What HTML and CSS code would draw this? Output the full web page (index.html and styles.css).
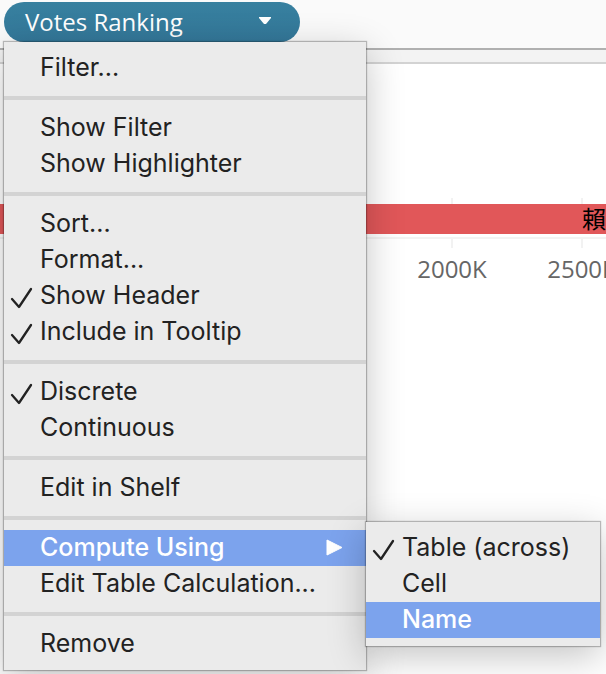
FILE: index.html
```html
<!DOCTYPE html>
<html lang="en">
<head>
<meta charset="utf-8">
<title>Votes Ranking</title>
<link rel="stylesheet" href="styles.css">
</head>
<body>
<svg class="defs" aria-hidden="true">
  <symbol id="check" viewBox="0 0 24 24"><path d="M2 13 9 21 21 3" fill="none" stroke="currentColor" stroke-width="2.3" stroke-linecap="round" stroke-linejoin="round"/></symbol>
</svg>
<header class="shelf">
  <button class="pill" type="button">Votes Ranking
    <svg class="caret" viewBox="0 0 12 8" aria-hidden="true"><path d="M0 0H12V1L7 7H5L0 1Z" fill="currentColor"/></svg>
  </button>
  <div class="menu" role="menu">
    <button class="item" role="menuitem">Filter...</button>
    <hr class="separator">
    <button class="item" role="menuitem">Show Filter</button>
    <button class="item" role="menuitem">Show Highlighter</button>
    <hr class="separator">
    <button class="item" role="menuitem">Sort...</button>
    <button class="item" role="menuitem">Format...</button>
    <button class="item" role="menuitem"><svg class="check"><use href="#check"/></svg>Show Header</button>
    <button class="item" role="menuitem"><svg class="check"><use href="#check"/></svg>Include in Tooltip</button>
    <hr class="separator">
    <button class="item" role="menuitem"><svg class="check"><use href="#check"/></svg>Discrete</button>
    <button class="item" role="menuitem">Continuous</button>
    <hr class="separator">
    <button class="item" role="menuitem">Edit in Shelf</button>
    <hr class="separator">
    <div class="parent">
      <button class="item selected" role="menuitem">Compute Using
        <svg class="arrow" viewBox="0 0 17 17" aria-hidden="true"><path d="M1 1 16 8.5 1 16Z" fill="currentColor" stroke="currentColor" stroke-linejoin="round"/></svg>
      </button>
      <div class="menu submenu" role="menu">
        <button class="item" role="menuitem"><svg class="check"><use href="#check"/></svg>Table (across)</button>
        <button class="item" role="menuitem">Cell</button>
        <button class="item selected" role="menuitem">Name</button>
      </div>
    </div>
    <button class="item" role="menuitem">Edit Table Calculation...</button>
    <hr class="separator">
    <button class="item" role="menuitem">Remove</button>
  </div>
</header>
<div class="divider"></div>
<main class="chart">
  <div class="ticks"><span class="tick"></span><span class="tick"></span></div>
  <div class="bar"><span class="bar-label">賴</span></div>
  <div class="ticks short"><span class="tick"></span><span class="tick"></span></div>
  <div class="axis">
    <div class="mark">2000K</div>
    <div class="mark">2500K</div>
  </div>
</main>
</body>
</html>
```
FILE: styles.css
```css
* {
  box-sizing: border-box;
}

body {
  margin: 0;
  min-height: 100vh;
  overflow: hidden;
  background: #fff;
  font-family: Inter, "Noto Sans CJK TC", sans-serif;
}

.defs {
  display: none;
}

button {
  border: 0;
  font: inherit;
  text-align: left;
}

.shelf {
  position: relative;
  height: 50px;
  padding: 2px 4px 0;
  background: #fafafa;
  border-bottom: 2px solid #b0b0b0;
}

.pill {
  display: flex;
  align-items: center;
  justify-content: space-between;
  width: 296px;
  height: 40px;
  padding: 0 29px 2px 21px;
  border-radius: 20px;
  background: linear-gradient(#37809f, #34789a);
  color: #fff;
  font-family: "Open Sans", sans-serif;
  font-size: 24px;
}

.caret {
  width: 12px;
  height: 8px;
}

.menu {
  position: absolute;
  z-index: 1;
  top: 42px;
  left: 4px;
  width: 362px;
  padding: 8px 0;
  background: #ebebeb;
  box-shadow: 0 0 1px 1px rgba(0, 0, 0, 0.25), 0 10px 36px rgba(0, 0, 0, 0.24);
}

.item {
  position: relative;
  display: flex;
  align-items: center;
  justify-content: space-between;
  width: 100%;
  height: 36px;
  padding: 0 23px 2px 36px;
  background: transparent;
  color: #222;
  font-size: 25px;
  white-space: nowrap;
}

.selected {
  background: #7ca3ed;
  color: #fff;
  font-weight: 500;
}

.check {
  position: absolute;
  left: 6px;
  top: 8px;
  width: 24px;
  height: 24px;
}

.arrow {
  width: 17px;
  height: 17px;
}

.separator {
  height: 4px;
  margin: 10px 0;
  border: 0;
  background: #d3d3d3;
}

.parent {
  position: relative;
}

.submenu {
  top: -8px;
  left: 100%;
  width: 234px;
}

.divider {
  height: 14px;
  background: #f3f3f3;
  border-bottom: 2px solid #d3d3d3;
}

.chart {
  padding-top: 134px;
  overflow: hidden;
}

.ticks,
.axis {
  display: flex;
  padding-left: 387px;
}

.tick {
  flex: 0 0 130px;
  height: 6px;
  background: linear-gradient(#f2f2f2, #f2f2f2) center / 2px 100% no-repeat;
}

.bar {
  height: 30px;
  padding-left: 582px;
  overflow: hidden;
  background: #e15759;
  color: #000;
  font: 400 24px/28px "Noto Sans CJK TC", sans-serif;
}

.short {
  margin-top: 3px;
  border-top: 2px solid #f3f3f3;
}

.short .tick {
  height: 9px;
}

.axis {
  padding-top: 5px;
}

.mark {
  flex: 0 0 130px;
  color: #666;
  font: 24px/32px "Open Sans", sans-serif;
  text-align: center;
}
```
